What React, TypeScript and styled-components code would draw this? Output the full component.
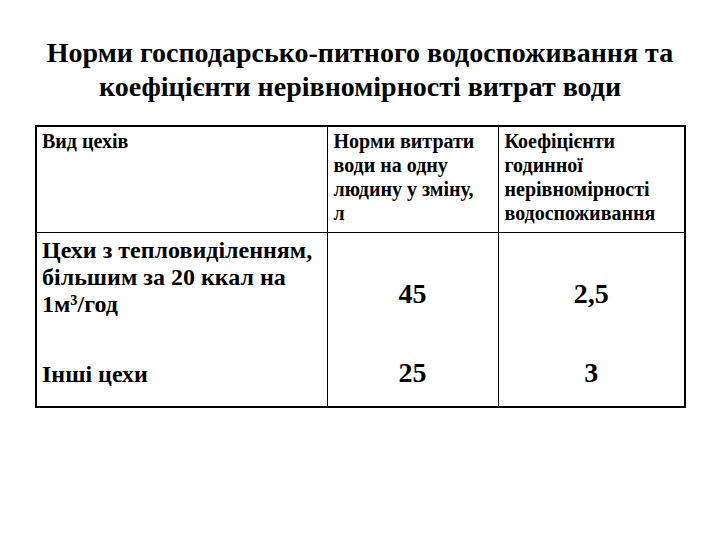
import * as React from 'react'
import styled, {createGlobalStyle} from 'styled-components'

const serif = `"Liberation Serif", "DejaVu Serif", "Times New Roman", serif`

const GlobalStyle = createGlobalStyle`
  html, body {
    margin: 0;
    padding: 0;
    background: #fff;
  }
  body {
    width: 720px;
    height: 540px;
    font-family: ${serif};
    color: #000;
  }
`

const Page = styled.div`
  width: 720px;
  height: 540px;
  padding-top: 36px;
  box-sizing: border-box;
  font-family: ${serif};
`

const Title = styled.h1`
  margin: 0;
  text-align: center;
  font-family: ${serif};
  font-size: 28px;
  line-height: 34px;
  font-weight: bold;
`

const Table = styled.table`
  margin: 21px 0 0 35px;
  width: 649px;
  border-collapse: collapse;
  border: 2px solid #000;
  table-layout: fixed;
  font-family: ${serif};
`

const HeadCell = styled.td<{w: number}>`
  box-sizing: border-box;
  width: ${p => p.w}px;
  height: 106px;
  padding: 2px 10px 0 6px;
  vertical-align: top;
  border-left: 1px solid #000;
  border-bottom: 1px solid #000;
  font-family: ${serif};
  font-size: 20px;
  line-height: 24px;
  font-weight: bold;
  &:first-child { border-left: none; padding-left: 5px; }
`

const NameCell = styled.td<{h: number; pt: number; align: string}>`
  box-sizing: border-box;
  height: ${p => p.h}px;
  padding: ${p => p.pt}px 4px 0 5px;
  vertical-align: ${p => p.align};
  font-family: ${serif};
  font-size: 24px;
  line-height: 27px;
  font-weight: bold;
`

const ValueCell = styled.td<{align: string}>`
  text-align: center;
  vertical-align: ${p => p.align};
  border-left: 1px solid #000;
  padding: 0;
  font-family: ${serif};
  font-size: 28px;
  line-height: 28px;
  font-weight: bold;
`

const rows = [
  {
    name: 'Цехи з тепловиділенням, більшим за 20 ккал на 1м³/год',
    norm: '45',
    coef: '2,5',
    h: 123,
    pt: 4,
    align: 'middle',
  },
  {name: 'Інші цехи', norm: '25', coef: '3', h: 52, pt: 6, align: 'baseline'},
]

export default function App() {
  return (
    <Page>
      <GlobalStyle />
      <Title>
        Норми господарсько-питного водоспоживання та<br />
        коефіцієнти нерівномірності витрат води
      </Title>
      <Table>
        <tbody>
          <tr>
            <HeadCell w={291}>Вид цехів</HeadCell>
            <HeadCell w={171}>Норми витрати води на одну людину у зміну, л</HeadCell>
            <HeadCell w={187}>Коефіцієнти годинної нерівномірності водоспоживання</HeadCell>
          </tr>
          {rows.map((r, i) => (
            <tr key={i}>
              <NameCell h={r.h} pt={r.pt} align={r.align === 'middle' ? 'top' : 'baseline'}>
                {r.name}
              </NameCell>
              <ValueCell align={r.align}>{r.norm}</ValueCell>
              <ValueCell align={r.align}>{r.coef}</ValueCell>
            </tr>
          ))}
        </tbody>
      </Table>
    </Page>
  )
}
